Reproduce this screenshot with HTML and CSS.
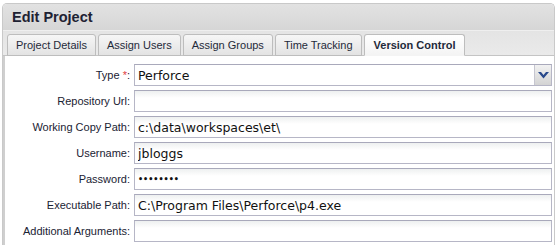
FILE: index.html
```html
<!DOCTYPE html>
<html lang="en">
<head>
    <meta charset="UTF-8">
    <title>Edit Project</title>
    <link rel="stylesheet" href="styles.css">
</head>
<body>
    <div class="panel">
        <div class="panel-title">Edit Project</div>
        <div class="tabs">
            <span class="tab">Project Details</span>
            <span class="tab">Assign Users</span>
            <span class="tab">Assign Groups</span>
            <span class="tab">Time Tracking</span>
            <span class="tab active">Version Control</span>
        </div>
        <div class="content">
            <form class="form">
                <label>Type <span class="req">*</span>:</label>
                <div class="select">
                    <span>Perforce</span>
                    <span class="select-btn">
                        <svg width="11" height="7" viewBox="0 0 11 7"><path d="M0 0h3l2.5 3L8 0h3L5.5 6.5z" fill="#2a4a8c"/></svg>
                    </span>
                </div>

                <label>Repository Url:</label>
                <input type="text" value="">

                <label>Working Copy Path:</label>
                <input type="text" value="c:\data\workspaces\et\">

                <label>Username:</label>
                <input type="text" value="jbloggs">

                <label>Password:</label>
                <input type="password" value="secret12">

                <label>Executable Path:</label>
                <input type="text" value="C:\Program Files\Perforce\p4.exe">

                <label>Additional Arguments:</label>
                <input type="text" value="">
            </form>
        </div>
    </div>
</body>
</html>
```

FILE: styles.css
```css
* {
    box-sizing: border-box;
    margin: 0;
    padding: 0;
}
body {
    background: #fff;
    font-family: "Liberation Sans", Arial, sans-serif;
    font-size: 11px;
    color: #1f2a3a;
}
.panel {
    margin: 3px 1px 0 2px;
    border: 1px solid #c9c9c9;
    border-bottom: none;
    border-radius: 5px 5px 0 0;
    overflow: hidden;
}
.panel-title {
    height: 26px;
    padding: 5px 0 0 9px;
    background: linear-gradient(#e2e2e2, #d6d6d6);
    font-size: 14.5px;
    font-weight: bold;
    color: #1e2233;
}
.tabs {
    display: flex;
    gap: 2px;
    padding: 3px 0 0 4px;
    background: linear-gradient(#e4e4e4, #eaeaea);
    border-top: 1px solid #efefef;
    border-bottom: 1px solid #c4c4c4;
}
.tab {
    height: 22px;
    margin-bottom: -1px;
    padding: 4px 8px 0;
    border: 1px solid #bdbdbd;
    border-radius: 3px 3px 0 0;
    background: linear-gradient(#f6f6f6, #e3e3e3);
    color: #1f2a3a;
    white-space: nowrap;
}
.tab.active {
    padding: 4px 9px 0 9px;
    background: linear-gradient(#ffffff, #f4f4f4);
    border-bottom-color: #f4f4f4;
    font-weight: bold;
}
.content {
    background: #fff;
    border-left: 2px double #cfcfcf;
    padding: 8px 2px 4px 0;
}
.form {
    display: grid;
    grid-template-columns: 125px 1fr;
    column-gap: 4px;
    row-gap: 4px;
    align-items: center;
}
.form label {
    text-align: right;
    color: #1a2233;
}
.req {
    color: #e04040;
}
.form input,
.select {
    height: 22px;
    width: 100%;
    border: 1px solid #b6b6c6;
    border-top-color: #a9a9bb;
    background: linear-gradient(#eef0f0, #ffffff 7px);
    font-family: "DejaVu Sans", Verdana, sans-serif;
    font-size: 12.5px;
    color: #111;
    padding: 0 3px;
    outline: none;
}
.form input[type="password"] {
    font-size: 8px;
    font-weight: bold;
}
.select {
    display: flex;
    align-items: center;
    justify-content: space-between;
    padding-right: 0;
    background: #fff;
}
.select-btn {
    display: flex;
    align-items: center;
    justify-content: center;
    width: 17px;
    height: 20px;
    border-left: 1px solid #c6c6d0;
    background: linear-gradient(#f2f2f2, #d4d4d4);
}
```
